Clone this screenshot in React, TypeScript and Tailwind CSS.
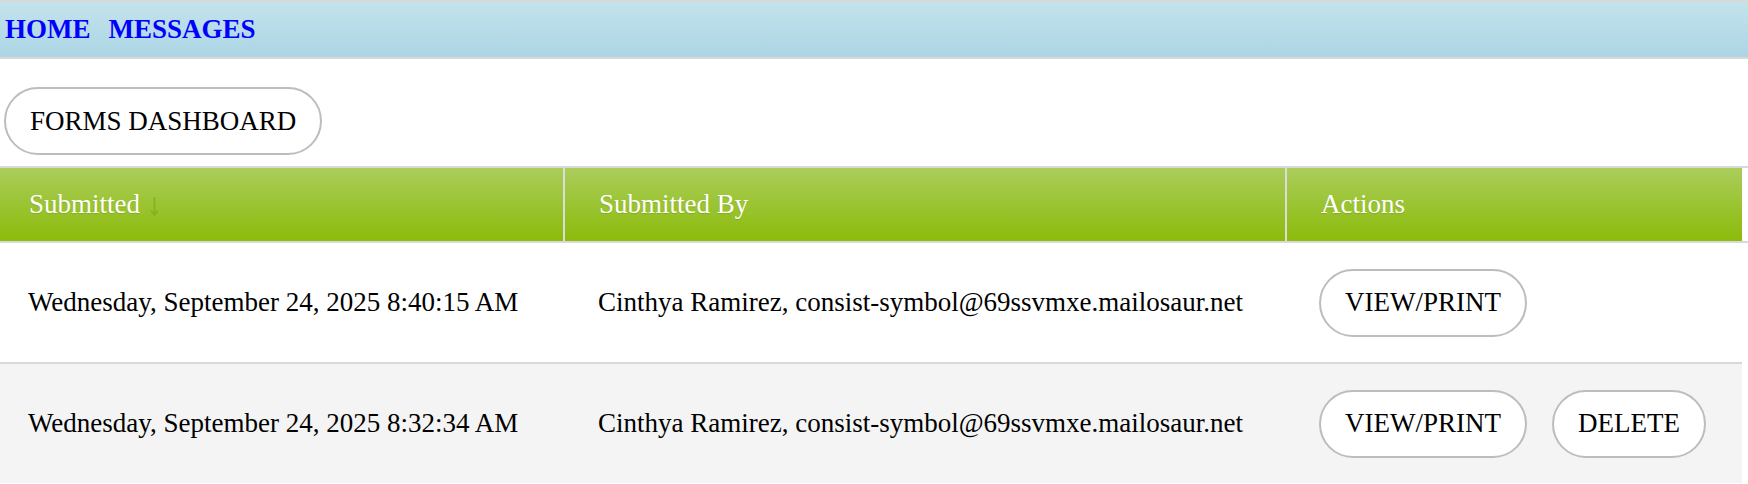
const serif = { fontFamily: '"Liberation Serif", "Times New Roman", serif' }

interface Submission {
    submitted: string
    by: string
    canDelete: boolean
}

const rows: Submission[] = [
    {
        submitted: 'Wednesday, September 24, 2025 8:40:15 AM',
        by: 'Cinthya Ramirez, consist-symbol@69ssvmxe.mailosaur.net',
        canDelete: false,
    },
    {
        submitted: 'Wednesday, September 24, 2025 8:32:34 AM',
        by: 'Cinthya Ramirez, consist-symbol@69ssvmxe.mailosaur.net',
        canDelete: true,
    },
]

function PillButton({ label }: { label: string }) {
    return (
        <button className="h-[68px] px-[24px] rounded-full border-2 border-[#bdbdbd] bg-white text-black text-[27px] leading-none flex items-center">
            {label}
        </button>
    )
}

function SortArrow() {
    return (
        <svg width="9" height="21" viewBox="0 0 9 21" className="ml-[10px] mt-[4px]">
            <path d="M4.5 1 V19 M1 14.5 L4.5 19 L8 14.5" fill="none" stroke="#84b224" strokeWidth="1.8" />
        </svg>
    )
}

export default function App() {
    return (
        <div className="w-[1748px] h-[484px] overflow-hidden bg-white text-black" style={serif}>
            {/* top nav */}
            <div className="h-[59px] border-y-2 border-[#d8d8d8] bg-[linear-gradient(to_bottom,#c3e3eb,#acd5e5)] flex items-center pl-[5px] gap-[18px]">
                <a href="#" className="text-[27px] font-bold text-[#0000ff] leading-none">HOME</a>
                <a href="#" className="text-[27px] font-bold text-[#0000ff] leading-none">MESSAGES</a>
            </div>

            <div className="pt-[28px] pb-[11px] pl-[4px]">
                <PillButton label="FORMS DASHBOARD" />
            </div>

            {/* table */}
            <div className="border-y-2 border-[#d9d9d9]">
                <div className="w-[1742px] h-[73px] grid grid-cols-[563px_722px_1fr] bg-[linear-gradient(to_bottom,#aacd5b,#8cbb0a)] text-white text-[27px] [text-shadow:0_1px_1px_rgba(0,0,0,0.12)]">
                    <div className="flex items-center pl-[29px]">
                        Submitted
                        <SortArrow />
                    </div>
                    <div className="flex items-center pl-[34px] border-l-2 border-[#dcdcdc]">Submitted By</div>
                    <div className="flex items-center pl-[34px] border-l-2 border-[#dcdcdc]">Actions</div>
                </div>
            </div>

            {rows.map((r, i) => (
                <div
                    key={i}
                    className={`w-[1742px] grid grid-cols-[563px_722px_1fr] text-[27px] ${i > 0 ? 'h-[121px] bg-[#f4f4f4] border-t-2 border-[#d9d9d9]' : 'h-[119px] bg-white'}`}
                >
                    <div className="flex items-center pl-[28px] whitespace-nowrap">{r.submitted}</div>
                    <div className="flex items-center pl-[35px] whitespace-nowrap">{r.by}</div>
                    <div className="flex items-center pl-[34px] gap-[25px]">
                        <PillButton label="VIEW/PRINT" />
                        {r.canDelete && <PillButton label="DELETE" />}
                    </div>
                </div>
            ))}
        </div>
    )
}
